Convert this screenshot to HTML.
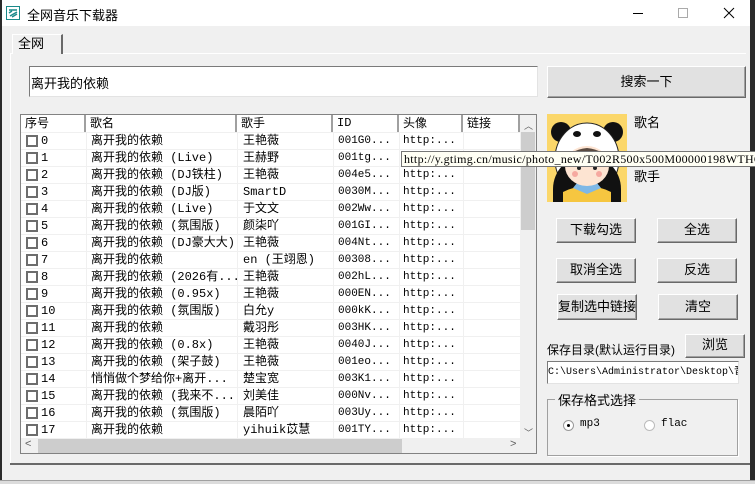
<!DOCTYPE html>
<html><head><meta charset="utf-8"><style>
*{box-sizing:border-box;margin:0;padding:0}
body{width:755px;height:484px;overflow:hidden;background:#2b2b2b;font:12px "Liberation Sans","Noto Sans CJK SC",sans-serif;color:#000;position:relative}
.a{position:absolute}
.win{left:2px;top:0;width:748px;height:484px;background:#f0f0f0}
.title{left:2px;top:0;width:748px;height:26px;background:#fff}
.btn{position:absolute;background:#e1e1e1;border:1px solid #fff;border-right-color:#696969;border-bottom-color:#696969;box-shadow:inset -1px -1px 0 #a0a0a0;text-align:center;font-size:13px}
.inp{position:absolute;background:#fff;border:1px solid #7a7a7a;border-right-color:#e3e3e3;border-bottom-color:#e3e3e3}
.row{position:absolute;left:21px;width:499px;height:17px;border-bottom:1px solid #f0f0f0;background:#fff;font-size:12px;line-height:17px;font-family:"Liberation Mono","Noto Sans CJK SC",monospace}
.row span{position:absolute;top:0;white-space:nowrap;overflow:hidden}
.cb{position:absolute;left:5px;top:2px;width:12px;height:12px;border:2px solid #6d6d6d;background:#fff}
.m{font-family:"Liberation Mono",monospace;font-size:11px}
.hd{position:absolute;top:115px;height:17px;border-right:2px solid #a0a0a0;background:#fff;padding-left:4px;line-height:17px;font-size:12px}
.cl{position:absolute;top:133px;width:1px;height:306px;background:#f0f0f0}
</style></head><body>
<div class="a win"></div>
<div class="a title"></div>
<svg class="a" style="left:6px;top:6px" width="14" height="14"><rect x="0.5" y="0.5" width="13" height="13" fill="#fff" stroke="#1a8a8a"/><path d="M3 4h8M3 7l3-2M4 10l7-4M6 11l5-3" stroke="#1a8a8a" stroke-width="1.5" fill="none"/></svg>
<div class="a" style="left:27px;top:5px;font-size:13px">全网音乐下载器</div>
<div class="a" style="left:633px;top:13px;width:10px;height:1px;background:#000"></div>
<div class="a" style="left:678px;top:8px;width:10px;height:10px;border:1px solid #aaa"></div>
<svg class="a" style="left:723px;top:7px" width="12" height="12"><path d="M1 1L11 11M11 1L1 11" stroke="#000"/></svg>
<div class="a" style="left:10px;top:53px;width:736px;height:1px;background:#fff"></div>
<div class="a" style="left:12px;top:34px;width:51px;height:20px;background:#f0f0f0;border:1px solid #fff;border-right:2px solid #696969;border-bottom:none;padding-left:5px;font-size:13px;line-height:18px">全网</div>
<div class="a" style="left:10px;top:54px;width:1px;height:410px;background:#fff"></div>
<div class="a" style="left:10px;top:463px;width:740px;height:2px;background:#696969"></div>
<div class="a" style="left:0;top:480px;width:755px;height:4px;background:#dcdcdc;border-top:1px solid #a0a0a0"></div>
<div class="inp" style="left:29px;top:66px;width:509px;height:31px;padding:6px 0 0 1px;font-size:13px">离开我的依赖</div>
<div class="btn" style="left:547px;top:66px;width:199px;height:32px;line-height:29px">搜索一下</div>
<div class="a" style="left:20px;top:114px;width:517px;height:340px;border:1px solid #828282;background:#f0f0f0"></div>
<div class="hd" style="left:21px;width:65px">序号</div>
<div class="hd" style="left:86px;width:151px">歌名</div>
<div class="hd" style="left:237px;width:96px">歌手</div>
<div class="hd m" style="left:333px;width:66px">ID</div>
<div class="hd" style="left:399px;width:64px">头像</div>
<div class="hd" style="left:463px;width:57px">链接</div>
<div id="rows"></div>
<div class="a" style="left:520px;top:115px;width:16px;height:324px;background:#f0f0f0"></div>
<div class="a" style="left:521px;top:132px;width:14px;height:98px;background:#cdcdcd"></div>
<div class="a" style="left:524px;top:119px;font-size:9px;color:#606060">︿</div>
<div class="a" style="left:524px;top:426px;font-size:9px;color:#606060">﹀</div>
<div class="a" style="left:21px;top:439px;width:499px;height:14px;background:#f0f0f0"></div>
<div class="a" style="left:38px;top:439px;width:364px;height:14px;background:#cdcdcd"></div>
<div class="a" style="left:25px;top:438px;font-size:11px;color:#606060">&lt;</div>
<div class="a" style="left:510px;top:438px;font-size:11px;color:#606060">&gt;</div>
<svg class="a" style="left:547px;top:114px" width="80" height="88" viewBox="0 0 80 88">
<rect width="80" height="88" fill="#fbd76a"/>
<circle cx="14" cy="18" r="10" fill="#111"/><circle cx="66" cy="18" r="10" fill="#111"/>
<ellipse cx="40" cy="45" rx="32" ry="36" fill="#fff" stroke="#222"/>
<path d="M6 88V75a30 30 0 0 1 68 0v13z" fill="#111"/>
<path d="M16 88V78q24-12 48 0v10z" fill="#f6c640"/>
<path d="M26 74l14 6 14-6-4-5H30z" fill="#7fb8e6"/>
<ellipse cx="40" cy="52" rx="22" ry="20" fill="#fde4d2"/>
<path d="M18 48q22-22 44 0q-4-12-22-14q-18 2-22 14z" fill="#5a4a40"/>
<circle cx="32" cy="54" r="2" fill="#222"/><circle cx="48" cy="54" r="2" fill="#222"/>
<circle cx="28" cy="60" r="3" fill="#f6a9a0"/><circle cx="52" cy="60" r="3" fill="#f6a9a0"/>
<ellipse cx="30" cy="20" rx="4" ry="3" fill="#111"/><ellipse cx="50" cy="20" rx="4" ry="3" fill="#111"/>
</svg>
<div class="a" style="left:634px;top:112px;font-size:13px">歌名</div>
<div class="a" style="left:634px;top:166px;font-size:13px">歌手</div>
<div class="a m" style="left:401px;top:151px;width:354px;height:16px;background:#fffff4;border:1px solid #767676;border-right:none;font-size:11px;line-height:14px;padding-left:2px;white-space:nowrap;overflow:hidden;z-index:5;font-family:'Liberation Serif',serif;font-size:12px;letter-spacing:0.3px">http://y.gtimg.cn/music/photo_new/T002R500x500M00000198WTHO</div>
<div class="btn" style="left:556px;top:218px;width:80px;height:25px;line-height:22px">下载勾选</div>
<div class="btn" style="left:657px;top:218px;width:80px;height:25px;line-height:22px">全选</div>
<div class="btn" style="left:556px;top:258px;width:80px;height:25px;line-height:22px">取消全选</div>
<div class="btn" style="left:657px;top:258px;width:80px;height:25px;line-height:22px">反选</div>
<div class="btn" style="left:557px;top:294px;width:80px;height:26px;line-height:23px">复制选中链接</div>
<div class="btn" style="left:658px;top:294px;width:80px;height:26px;line-height:23px">清空</div>
<div class="a" style="left:547px;top:341px;font-size:12px;white-space:nowrap">保存目录(默认运行目录)</div>
<div class="btn" style="left:685px;top:334px;width:60px;height:24px;line-height:20px">浏览</div>
<div class="inp" style="left:547px;top:361px;width:192px;height:23px;line-height:21px;white-space:nowrap;overflow:hidden;font-family:'Liberation Mono',monospace;font-size:10px">C:\Users\Administrator\Desktop\音</div>
<div class="a" style="left:547px;top:399px;width:191px;height:57px;border:1px solid #a0a0a0;box-shadow:1px 1px 0 #fff"></div>
<div class="a" style="left:555px;top:390px;background:#f0f0f0;padding:0 3px;font-size:13px">保存格式选择</div>
<div class="a" style="left:563px;top:420px;width:11px;height:11px;border-radius:50%;border:1px solid #999;background:#fff"></div>
<div class="a" style="left:567px;top:424px;width:3px;height:3px;border-radius:50%;background:#000"></div>
<div class="a m" style="left:580px;top:418px">mp3</div>
<div class="a" style="left:644px;top:420px;width:11px;height:11px;border-radius:50%;border:1px solid #bbb;background:#fff"></div>
<div class="a m" style="left:661px;top:418px">flac</div>
<script>
var d=[["离开我的依赖","王艳薇","001G0..."],["离开我的依赖 (Live)","王赫野","001tg..."],["离开我的依赖 (DJ铁柱)","王艳薇","004e5..."],["离开我的依赖 (DJ版)","SmartD","0030M..."],["离开我的依赖 (Live)","于文文","002Ww..."],["离开我的依赖 (氛围版)","颜柒吖","001GI..."],["离开我的依赖 (DJ豪大大)","王艳薇","004Nt..."],["离开我的依赖","en (王翊恩)","00308..."],["离开我的依赖 (2026有...","王艳薇","002hL..."],["离开我的依赖 (0.95x)","王艳薇","000EN..."],["离开我的依赖 (氛围版)","白允y","000kK..."],["离开我的依赖","戴羽彤","003HK..."],["离开我的依赖 (0.8x)","王艳薇","0040J..."],["离开我的依赖 (架子鼓)","王艳薇","001eo..."],["悄悄做个梦给你+离开...","楚宝宽","003K1..."],["离开我的依赖 (我来不...","刘美佳","000Nv..."],["离开我的依赖 (氛围版)","晨陌吖","003Uy..."],["离开我的依赖","yihuik苡慧","001TY..."]];
var h="";
d.forEach(function(r,i){h+='<div class="row" style="top:'+(133+17*i)+'px"><div class="cb"></div><span style="left:20px">'+i+'</span><span style="left:70px;width:146px">'+r[0]+'</span><span style="left:222px;width:94px">'+r[1]+'</span><span class="m" style="left:317px">'+r[2]+'</span><span class="m" style="left:382px">http:...</span></div>';});
h+='<div class="cl" style="left:86px"></div><div class="cl" style="left:237px"></div><div class="cl" style="left:333px"></div><div class="cl" style="left:399px"></div><div class="cl" style="left:463px"></div>';
document.getElementById("rows").innerHTML=h;
</script>
</body></html>
